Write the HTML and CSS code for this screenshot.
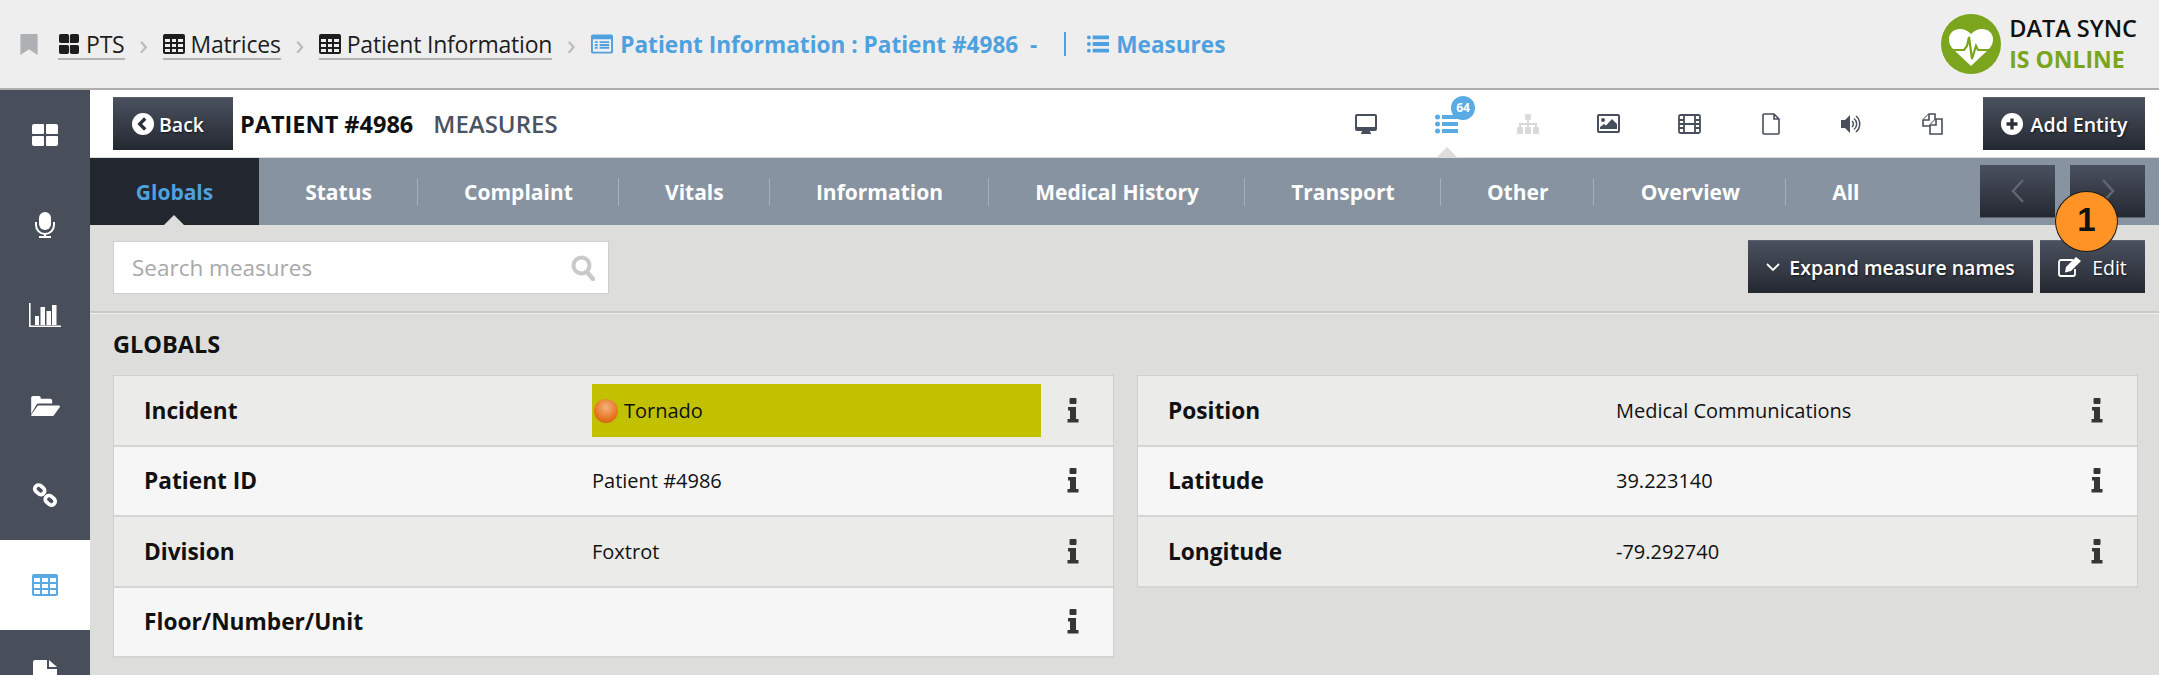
FILE: index.html
```html
<!DOCTYPE html>
<html lang="en">

<head>
    <meta charset="UTF-8">
    <title>Patient Information : Patient #4986 - Measures</title>
    <link rel="stylesheet" href="styles.css">
</head>

<body>
    <svg class="defs">
        <symbol id="info" viewBox="0 0 12 25">
            <rect x="2.500" y="0" width="7" height="6" rx="1" />
            <path d="M1 9h8v12h2.500v3.500H.5V21H3v-8.500H1z" />
        </symbol>
    </svg>

    <header class="topbar">
        <svg class="bookmark" viewBox="0 0 18 22"><path d="M1 0h16a1 1 0 0 1 1 1v21l-9-6-9 6V1a1 1 0 0 1 1-1z" /></svg>
        <nav class="crumbs">
            <a class="crumb">
                <svg class="crumb-icon" viewBox="0 0 22 22"><path d="M0 2a2 2 0 0 1 2-2h7a2 2 0 0 1 2 2v7a1 1 0 0 1-1 1H2a2 2 0 0 1-2-2zM12 2a2 2 0 0 1 2-2h6a2 2 0 0 1 2 2v6a2 2 0 0 1-2 2h-7a1 1 0 0 1-1-1zM0 13a1 1 0 0 1 1-1h8a2 2 0 0 1 2 2v6a2 2 0 0 1-2 2H2a2 2 0 0 1-2-2zM12 13a1 1 0 0 1 1-1h7a2 2 0 0 1 2 2v6a2 2 0 0 1-2 2h-6a2 2 0 0 1-2-2z" /></svg>
                PTS
            </a>
            <span class="sep">&#8250;</span>
            <a class="crumb">
                <svg class="crumb-icon" viewBox="0 0 22 20"><path d="M2 0h18a2 2 0 0 1 2 2v16a2 2 0 0 1-2 2H2a2 2 0 0 1-2-2V2a2 2 0 0 1 2-2zm0 5v3h5V5zm7 0v3h4V5zm6 0v3h5V5zM2 10v3h5v-3zm7 0v3h4v-3zm6 0v3h5v-3zM2 15v3h5v-3zm7 0v3h4v-3zm6 0v3h5v-3z" fill-rule="evenodd" /></svg>
                Matrices
            </a>
            <span class="sep">&#8250;</span>
            <a class="crumb">
                <svg class="crumb-icon" viewBox="0 0 22 20"><path d="M2 0h18a2 2 0 0 1 2 2v16a2 2 0 0 1-2 2H2a2 2 0 0 1-2-2V2a2 2 0 0 1 2-2zm0 5v3h5V5zm7 0v3h4V5zm6 0v3h5V5zM2 10v3h5v-3zm7 0v3h4v-3zm6 0v3h5v-3zM2 15v3h5v-3zm7 0v3h4v-3zm6 0v3h5v-3z" fill-rule="evenodd" /></svg>
                Patient Information
            </a>
            <span class="sep">&#8250;</span>
            <span class="crumb-current">
                <svg class="crumb-icon" viewBox="0 0 23 20"><path d="M2 0h19a2 2 0 0 1 2 2v16a2 2 0 0 1-2 2H2a2 2 0 0 1-2-2V2a2 2 0 0 1 2-2zm0 5v13h19V5zm2 2h3v2H4zm5 0h10v2H9zm-5 3h3v2H4zm5 0h10v2H9zm-5 3h3v2H4zm5 0h10v2H9z" fill-rule="evenodd" /></svg>
                Patient Information : Patient #4986&nbsp; -
                <span class="bar"></span>
                <svg class="crumb-icon" viewBox="0 0 23 20"><circle cx="2" cy="3" r="2" /><circle cx="2" cy="10" r="2" /><circle cx="2" cy="17" r="2" /><path d="M6 1h17v4H6zM6 8h17v4H6zM6 15h17v4H6z" /></svg>
                Measures
            </span>
        </nav>
        <div class="sync">
            <svg class="sync-logo" viewBox="0 0 60 60">
                <circle cx="30" cy="30" r="30" fill="#7aa51c" />
                <path d="M30 52 13 36C9 32 8 29 8 25c0-6 5-10 11-10 5 0 8 2 11 5 3-3 6-5 11-5 6 0 11 4 11 10 0 4-1 7-5 11z" fill="#fff" />
                <path d="M8 36h15l3-4 2-9 3 22 4-13 2 4h15" fill="none" stroke="#7aa51c" stroke-width="2.200" />
            </svg>
            <div class="sync-text">
                <div>DATA SYNC</div>
                <div class="sync-state">IS ONLINE</div>
            </div>
        </div>
    </header>

    <div class="layout">
        <aside class="sidebar">
            <a class="side-item">
                <svg width="26" height="22" viewBox="0 0 26 22"><path d="M2 0h9a1 1 0 0 1 1 1v8a1 1 0 0 1-1 1H1a1 1 0 0 1-1-1V2a2 2 0 0 1 2-2zM15 0h9a2 2 0 0 1 2 2v7a1 1 0 0 1-1 1H15a1 1 0 0 1-1-1V1a1 1 0 0 1 1-1zM1 12h10a1 1 0 0 1 1 1v8a1 1 0 0 1-1 1H2a2 2 0 0 1-2-2v-7a1 1 0 0 1 1-1zM15 12h10a1 1 0 0 1 1 1v7a2 2 0 0 1-2 2h-9a1 1 0 0 1-1-1v-8a1 1 0 0 1 1-1z" /></svg>
            </a>
            <a class="side-item">
                <svg width="20" height="26" viewBox="0 0 20 26"><rect x="4" y="0" width="12" height="18" rx="6" /><path d="M1 10v3a9 9 0 0 0 18 0v-3" fill="none" stroke="#fff" stroke-width="2" /><path d="M9 21h2v3h5v2H4v-2h5z" /></svg>
            </a>
            <a class="side-item">
                <svg width="32" height="24" viewBox="0 0 32 24"><path d="M0 0h1.600v22.400H32V24H0z" /><path d="M6 13h4v9H6zM11.500 4h4.500v18h-4.500zM17.500 8h4.500v14h-4.500zM23 2h4.500v20H23z" /></svg>
            </a>
            <a class="side-item">
                <svg width="29" height="21" viewBox="0 0 30 22"><path d="M0 20V3a2 2 0 0 1 2-2h6a2 2 0 0 1 2 2v1h10a2 2 0 0 1 2 2v3H8a3 3 0 0 0-3 2z" /><path d="M7 11h22a1 1 0 0 1 1 1.500L24 21a2 2 0 0 1-2 1H1a1 1 0 0 1-.8-1.500z" /></svg>
            </a>
            <a class="side-item">
                <svg width="26" height="24" viewBox="0 0 26 24"><g fill="none" stroke="#fff" stroke-width="3.800"><rect x="2.500" y="3" width="10.500" height="7.500" rx="3.700" transform="rotate(40 7.700 6.700)" /><rect x="13" y="13.500" width="10.500" height="7.500" rx="3.700" transform="rotate(40 18.200 17.200)" /></g></svg>
            </a>
            <a class="side-item side-active">
                <svg width="26" height="22" viewBox="0 0 26 22"><path d="M2 0h22a2 2 0 0 1 2 2v18a2 2 0 0 1-2 2H2a2 2 0 0 1-2-2V2a2 2 0 0 1 2-2zm0 4v4h6V4zm8 0v4h6V4zm8 0v4h6V4zM2 10v4h6v-4zm8 0v4h6v-4zm8 0v4h6v-4zM2 16v4h6v-4zm8 0v4h6v-4zm8 0v4h6v-4z" fill-rule="evenodd" /></svg>
            </a>
            <a class="side-item">
                <svg width="24" height="30" viewBox="0 0 24 30"><path d="M2 0h12v9h10v19a2 2 0 0 1-2 2H2a2 2 0 0 1-2-2V2a2 2 0 0 1 2-2zM16 0l8 7h-8z" /></svg>
            </a>
        </aside>

        <main class="content">
            <div class="titlebar">
                <button class="btn btn-back">
                    <svg class="btn-icon" viewBox="0 0 20 20"><circle cx="10" cy="10" r="10" fill="#fff" /><path d="m12 5-5 5 5 5" fill="none" stroke="#2b303a" stroke-width="3" /></svg>
                    Back
                </button>
                <h1 class="title">PATIENT #4986</h1>
                <span class="subtitle">MEASURES</span>
                <div class="entity-icons">
                    <a class="entity">
                        <svg width="22" height="20" viewBox="0 0 22 20"><path d="M2 0h18a2 2 0 0 1 2 2v13a2 2 0 0 1-2 2h-5v1.500h1V20H6v-1.500h1V17H2a2 2 0 0 1-2-2V2a2 2 0 0 1 2-2zm0 2v11h18V2z" fill="#474f5c" fill-rule="evenodd" /></svg>
                    </a>
                    <a class="entity entity-active">
                        <svg width="23" height="20" viewBox="0 0 23 20" fill="#59abe3"><circle cx="2.500" cy="3" r="2.500" /><circle cx="2.500" cy="10" r="2.500" /><circle cx="2.500" cy="17" r="2.500" /><path d="M7 1h16v4H7zM7 8h16v4H7zM7 15h16v4H7z" /></svg>
                        <span class="badge">64</span>
                    </a>
                    <a class="entity">
                        <svg width="22" height="20" viewBox="0 0 22 20" fill="#d9dadc"><rect x="8" y="0" width="6" height="6" rx="1" /><rect x="0" y="13" width="6" height="7" rx="1" /><rect x="8" y="13" width="6" height="7" rx="1" /><rect x="16" y="13" width="6" height="7" rx="1" /><path d="M10 6h2v3h8v4h-2v-2h-6v2h-2v-2H4v2H2V9h8z" /></svg>
                    </a>
                    <a class="entity">
                        <svg width="23" height="19" viewBox="0 0 23 19"><rect x="1" y="1" width="21" height="17" rx="1" fill="#fff" stroke="#474f5c" stroke-width="2" /><circle cx="6" cy="6" r="2" fill="#474f5c" /><path d="M3 15v-2l4-3 2 1.500L15 5l5 5v5z" fill="#474f5c" /></svg>
                    </a>
                    <a class="entity">
                        <svg width="23" height="20" viewBox="0 0 23 20"><g fill="none" stroke="#474f5c" stroke-width="1.800"><rect x="1" y="1" width="21" height="18" rx="1.500" /><path d="M6 1v18M17 1v18M1 6h5M1 10h5M1 14h5M17 6h5M17 10h5M17 14h5M6 10h11" /></g></svg>
                    </a>
                    <a class="entity">
                        <svg width="18" height="22" viewBox="0 0 18 22"><path d="M1 2a1 1 0 0 1 1-1h10l5 5v14a1 1 0 0 1-1 1H2a1 1 0 0 1-1-1zM12 1v5h5" fill="#fff" stroke="#474f5c" stroke-width="1.600" /></svg>
                    </a>
                    <a class="entity">
                        <svg width="21" height="20" viewBox="0 0 21 20"><path d="M0 6h4l5-5v18l-5-5H0z" fill="#474f5c" /><path d="M11 7a4 4 0 0 1 0 6M13 4.500a7 7 0 0 1 0 11M15 2a10.500 10.500 0 0 1 0 16" fill="none" stroke="#474f5c" stroke-width="1.500" /></svg>
                    </a>
                    <a class="entity">
                        <svg width="21" height="22" viewBox="0 0 21 22"><g fill="#fff" stroke="#474f5c" stroke-width="1.600"><path d="M7 1h6v12H1V7z" /><path d="M7 1v6H1" /><path d="M14 6h6v15H8V12z" /><path d="M14 6v6H8" /></g></svg>
                    </a>
                </div>
                <button class="btn btn-add">
                    <svg class="btn-icon" viewBox="0 0 20 20"><circle cx="10" cy="10" r="10" fill="#fff" /><path d="M10 5v10M5 10h10" fill="none" stroke="#2b303a" stroke-width="3" /></svg>
                    Add Entity
                </button>
            </div>

            <div class="tabs">
                <a class="tab tab-active">Globals</a>
                <a class="tab">Status</a>
                <a class="tab">Complaint</a>
                <a class="tab">Vitals</a>
                <a class="tab">Information</a>
                <a class="tab">Medical History</a>
                <a class="tab">Transport</a>
                <a class="tab">Other</a>
                <a class="tab">Overview</a>
                <a class="tab tab-last">All</a>
                <div class="tab-nav">
                    <button class="btn btn-nav"><svg width="14" height="26" viewBox="0 0 14 26"><path d="M12 2 2 13l10 11" fill="none" stroke="#5f6773" stroke-width="2.500" /></svg></button>
                    <button class="btn btn-nav"><svg width="14" height="26" viewBox="0 0 14 26"><path d="m2 2 10 11L2 24" fill="none" stroke="#5f6773" stroke-width="2.500" /></svg></button>
                </div>
            </div>

            <div class="toolbar">
                <div class="search">
                    <span class="search-text">Search measures</span>
                    <svg class="search-icon" viewBox="0 0 24 26"><circle cx="10.500" cy="10.500" r="8" fill="none" stroke="#c9c9c9" stroke-width="4" /><path d="m16 17 6 7" stroke="#c9c9c9" stroke-width="4.500" stroke-linecap="round" /></svg>
                </div>
                <button class="btn btn-expand">
                    <svg width="14" height="9" viewBox="0 0 14 9"><path d="m1 1 6 6 6-6" fill="none" stroke="#fff" stroke-width="1.800" /></svg>
                    Expand measure names
                </button>
                <button class="btn btn-edit">
                    <svg width="24" height="20" viewBox="0 0 24 20"><path d="M15 3H3a2 2 0 0 0-2 2v12a2 2 0 0 0 2 2h12a2 2 0 0 0 2-2v-5" fill="none" stroke="#fff" stroke-width="1.800" /><path d="M8 10 18 0l5 4-10 10-6 1.500z" fill="#fff" /></svg>
                    Edit
                </button>
            </div>

            <section class="section">
                <h2 class="section-title">GLOBALS</h2>
                <div class="columns">
                    <div class="rows">
                        <div class="row">
                            <span class="row-label">Incident</span>
                            <span class="row-value row-value-flag"><span class="dot"></span>Tornado</span>
                            <svg class="row-info"><use href="#info" /></svg>
                        </div>
                        <div class="row">
                            <span class="row-label">Patient ID</span>
                            <span class="row-value">Patient #4986</span>
                            <svg class="row-info"><use href="#info" /></svg>
                        </div>
                        <div class="row">
                            <span class="row-label">Division</span>
                            <span class="row-value">Foxtrot</span>
                            <svg class="row-info"><use href="#info" /></svg>
                        </div>
                        <div class="row">
                            <span class="row-label">Floor/Number/Unit</span>
                            <span class="row-value"></span>
                            <svg class="row-info"><use href="#info" /></svg>
                        </div>
                    </div>
                    <div class="rows">
                        <div class="row">
                            <span class="row-label">Position</span>
                            <span class="row-value">Medical Communications</span>
                            <svg class="row-info"><use href="#info" /></svg>
                        </div>
                        <div class="row">
                            <span class="row-label">Latitude</span>
                            <span class="row-value">39.223140</span>
                            <svg class="row-info"><use href="#info" /></svg>
                        </div>
                        <div class="row">
                            <span class="row-label">Longitude</span>
                            <span class="row-value">-79.292740</span>
                            <svg class="row-info"><use href="#info" /></svg>
                        </div>
                    </div>
                </div>
            </section>
        </main>
    </div>

    <div class="callout">1</div>
</body>

</html>
```

FILE: styles.css
```css
* {
    margin: 0;
    padding: 0;
    box-sizing: border-box;
}

html,
body {
    height: 100%;
    overflow: hidden;
}

body {
    background-color: #dddddb;
    font-family: "Open Sans", sans-serif;
    color: #111;
    position: relative;
}

button {
    font-family: inherit;
    border: none;
}

.defs {
    display: none;
}

/* top bar */
.topbar {
    height: 90px;
    display: flex;
    align-items: center;
    padding: 0 14px 0 20px;
    background-color: #eeeeee;
    border-bottom: 2px solid #aeaeae;
}

.bookmark {
    width: 18px;
    height: 21px;
    margin-top: 1px;
    fill: #aeb0b3;
}

.crumbs {
    display: flex;
    align-items: center;
    margin-left: 20px;
    font-size: 23px;
}

.crumb {
    display: flex;
    align-items: center;
    gap: 6px;
    height: 30px;
    margin-top: 2px;
    border-bottom: 2px solid #b4b4b4;
    color: #1d1d1d;
    letter-spacing: -0.2px;
}

.crumb-icon {
    width: 22px;
    height: 20px;
    fill: currentColor;
}

.sep {
    width: 38px;
    text-align: center;
    color: #bbbbbb;
    font-size: 30px;
    line-height: 30px;
}

.crumb-current {
    display: flex;
    align-items: center;
    gap: 7px;
    margin-left: 1px;
    font-size: 22.600px;
    font-weight: 700;
    color: #4ea1de;
}

.bar {
    width: 2px;
    height: 24px;
    margin: 0 14px 0 20px;
    background-color: #4ea1de;
}

.sync {
    display: flex;
    align-items: center;
    gap: 8px;
    margin-left: auto;
    margin-right: 8px;
}

.sync-logo {
    width: 60px;
    height: 60px;
}

.sync-text {
    font-size: 23.500px;
    font-weight: 600;
    line-height: 31px;
    color: #111;
}

.sync-state {
    font-size: 23px;
    font-weight: 700;
    color: #7aa51c;
}

/* page layout */
.layout {
    display: flex;
    height: 585px;
}

.sidebar {
    width: 90px;
    flex-shrink: 0;
    background-color: #484f5b;
    overflow: hidden;
}

.side-item {
    display: flex;
    align-items: center;
    justify-content: center;
    height: 90px;
    fill: #fff;
}

.side-active {
    background-color: #fff;
    fill: #5aa9e2;
}

.content {
    flex: 1;
    min-width: 0;
}

/* dark buttons */
.btn {
    display: flex;
    align-items: center;
    justify-content: center;
    height: 53px;
    color: #fff;
    font-size: 19.500px;
    font-weight: 600;
    background: linear-gradient(#4a515e, #242831);
    border-top: 1px solid #5b626e;
    text-shadow: 1px 1px 2px rgba(0, 0, 0, 0.6);
}

.btn-icon {
    width: 22px;
    height: 22px;
}

/* white title row */
.titlebar {
    height: 68px;
    display: flex;
    align-items: center;
    padding: 0 14px 0 23px;
    background-color: #fff;
    border-bottom: 1px solid #dddddb;
}

.btn-back {
    width: 120px;
    gap: 5px;
    padding-right: 10px;
}

.title {
    margin-left: 7px;
    font-size: 23.500px;
    font-weight: 700;
    color: #111;
}

.subtitle {
    margin-left: 20px;
    font-size: 24px;
    font-weight: 600;
    color: #4a5361;
}

.entity-icons {
    display: flex;
    margin-left: auto;
    margin-right: 10px;
}

.entity {
    position: relative;
    display: flex;
    align-items: center;
    justify-content: center;
    width: 81px;
    height: 66px;
}

.badge {
    position: absolute;
    top: 5px;
    left: 45px;
    width: 24px;
    height: 24px;
    border-radius: 50%;
    background-color: #59abe3;
    color: #fff;
    font-size: 12px;
    font-weight: 700;
    line-height: 24px;
    text-align: center;
}

.entity-active::after {
    content: "";
    position: absolute;
    left: 31px;
    bottom: 0;
    border-left: 10px solid transparent;
    border-right: 10px solid transparent;
    border-bottom: 10px solid #dddddb;
}

.btn-add {
    width: 162px;
    gap: 8px;
}

/* tabs */
.tabs {
    height: 67px;
    display: flex;
    align-items: center;
    background-color: #8793a1;
}

.tab {
    display: flex;
    align-items: center;
    height: 28px;
    padding: 0 45px 0 46.200px;
    border-right: 1px solid #a5afba;
    color: #fff;
    font-size: 21px;
    font-weight: 700;
}

.tab-active {
    position: relative;
    height: 67px;
    width: 169px;
    justify-content: center;
    padding: 0;
    border-right: none;
    background-color: #22262f;
    color: #4ea1de;
}

.tab-active::after {
    content: "";
    position: absolute;
    left: 74px;
    bottom: 0;
    border-left: 10px solid transparent;
    border-right: 10px solid transparent;
    border-bottom: 10px solid #dddddb;
}

.tab-last {
    border-right: none;
}

.tab-nav {
    display: flex;
    gap: 15px;
    margin-left: auto;
    margin-right: 14px;
}

.btn-nav {
    width: 75px;
    border-top: none;
    border-bottom: 1px solid #5b626e;
}

/* search row */
.toolbar {
    height: 88px;
    display: flex;
    align-items: flex-start;
    padding: 15px 14px 0 23px;
    border-bottom: 2px solid #c9c9c7;
    box-shadow: 0 1px 0 #f0f0ee;
}

.search {
    width: 496px;
    height: 53px;
    display: flex;
    align-items: center;
    justify-content: space-between;
    padding: 0 13px 0 18px;
    background-color: #fff;
    border: 1px solid #cfcfcd;
    margin-right: auto;
    margin-top: 1px;
}

.search-text {
    font-size: 22.500px;
    color: #a8a8a8;
}

.search-icon {
    width: 24px;
    height: 26px;
}

.btn-expand {
    width: 285px;
    gap: 9px;
}

.btn-edit {
    width: 105px;
    gap: 10px;
    margin-left: 7px;
    font-weight: 400;
}

/* measures */
.section {
    padding: 0 23px;
}

.section-title {
    height: 62px;
    padding-top: 16px;
    font-size: 23.500px;
    font-weight: 700;
    line-height: 30px;
    color: #111;
}

.columns {
    display: grid;
    grid-template-columns: 1001px 1001px;
    gap: 23px;
    align-items: start;
}

.rows {
    border: 1px solid #cfcfcd;
    border-bottom: none;
}

.row {
    height: 70.500px;
    display: flex;
    align-items: center;
    padding-left: 30px;
    border-bottom: 2px solid #d4d4d2;
    background-color: #f6f6f6;
}

.row:nth-child(odd) {
    background-color: #ebebe9;
}

.row-label {
    width: 448px;
    flex-shrink: 0;
    font-size: 22.700px;
    font-weight: 700;
    color: #111;
}

.row-value {
    width: 449px;
    flex-shrink: 0;
    font-size: 20px;
    color: #111;
}

.row-value-flag {
    display: flex;
    align-items: center;
    height: 53px;
    background-color: #c1c100;
    padding-left: 2px;
}

.dot {
    width: 24px;
    height: 24px;
    margin-right: 6px;
    margin-top: 2px;
    border-radius: 50%;
    background: radial-gradient(circle at 50% 35%, #f4b27e, #e66f18 65%, #a56a2c);
}

.row-info {
    width: 12px;
    height: 25px;
    margin-left: 26px;
    fill: #363636;
}

/* numbered marker over the toolbar */
.callout {
    position: absolute;
    left: 2055px;
    top: 191px;
    width: 63px;
    height: 61px;
    border-radius: 50%;
    background-color: #ff9325;
    border: 1.500px solid #1a1a1a;
    color: #111;
    font-family: "Liberation Sans", sans-serif;
    font-size: 33px;
    font-weight: 700;
    line-height: 56px;
    text-align: center;
}
```
